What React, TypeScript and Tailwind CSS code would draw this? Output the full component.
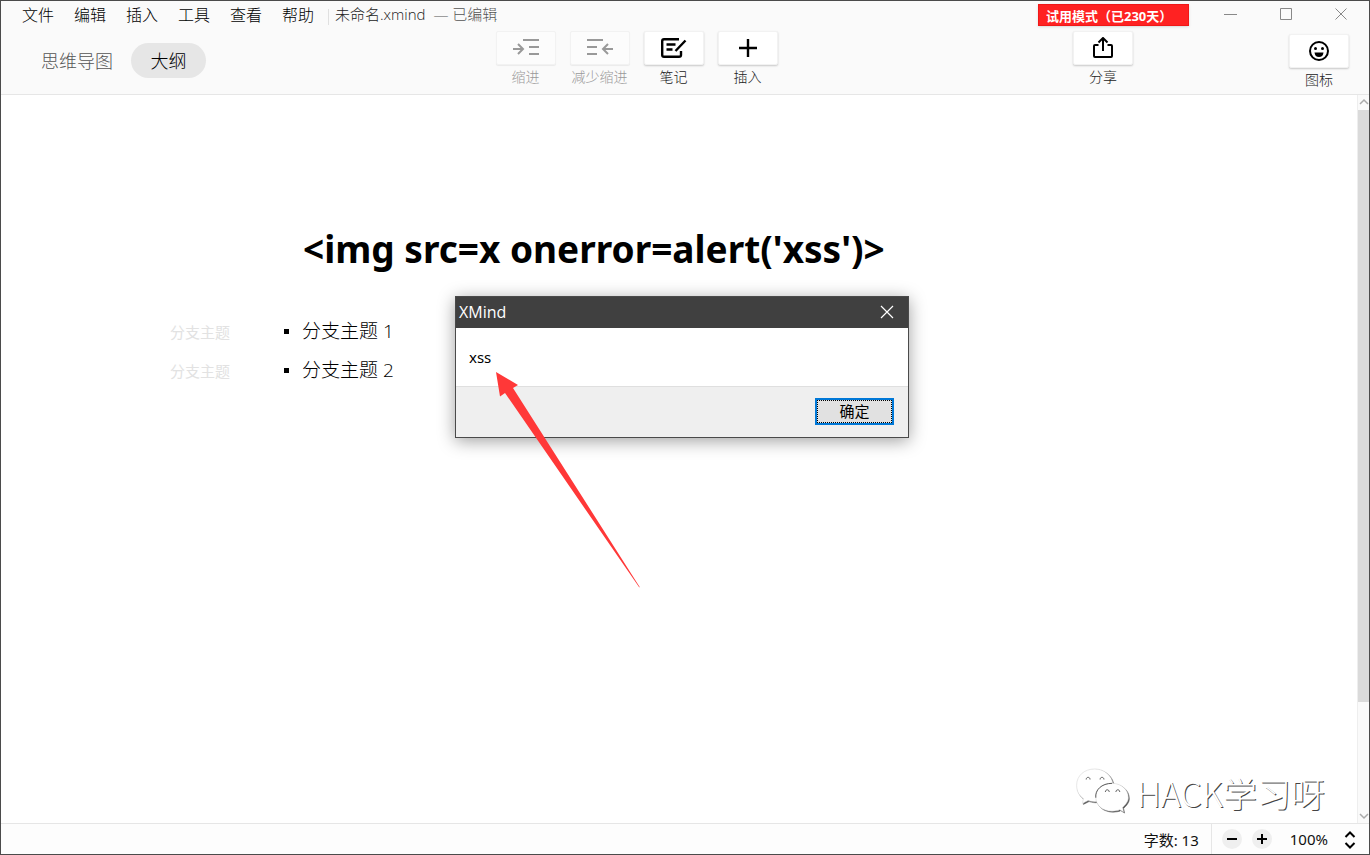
import type { ReactNode } from "react";

const ui = "font-['Noto_Sans','Noto_Sans_CJK_SC',sans-serif]";
const cjkLight = "font-['Open_Sans','Noto_Sans_CJK_SC',sans-serif] font-light";

const menus = ["文件", "编辑", "插入", "工具", "查看", "帮助"];
const topics = ["分支主题 1", "分支主题 2"];

function IndentIcon() {
  return (
    <svg width="28" height="20" viewBox="0 0 28 20" fill="none" stroke="currentColor" strokeWidth="2">
      <path d="M11 2H27M17 9H27M17 16H27M1 11H10M6 6L11 11L6 16" />
    </svg>
  );
}

function OutdentIcon() {
  return (
    <svg width="28" height="20" viewBox="0 0 28 20" fill="none" stroke="currentColor" strokeWidth="2">
      <path d="M1 2H17M1 9H11M1 16H11M27 11H18M22 6L17 11L22 16" />
    </svg>
  );
}

function NoteIcon() {
  return (
    <svg width="26" height="20" viewBox="0 0 26 20" fill="none" stroke="currentColor" strokeWidth="2.400">
      <path d="M18 1.200H3Q1.200 1.200 1.200 3V17Q1.200 18.800 3 18.800H18Q20 18.800 20 17V13M5.500 6.500H14.500M5.500 11.500H11.500M24.500 2.500L14.500 13" />
    </svg>
  );
}

function PlusIcon() {
  return (
    <svg width="20" height="20" viewBox="0 0 20 20" fill="none" stroke="currentColor" strokeWidth="2.400">
      <path d="M1 10H19M10 1V19" />
    </svg>
  );
}

function ShareIcon() {
  return (
    <svg width="22" height="22" viewBox="0 0 22 22" fill="none" stroke="currentColor" strokeWidth="2" strokeLinejoin="round">
      <path d="M6.500 8H3Q2 8 2 9V19Q2 20 3 20H19Q20 20 20 19V9Q20 8 19 8H15.500M11 14V1.500M6.500 5.500L11 1L15.500 5.500" />
    </svg>
  );
}

function FaceIcon() {
  return (
    <svg width="20" height="20" viewBox="0 0 20 20" fill="none">
      <circle cx="10" cy="10" r="9" stroke="currentColor" strokeWidth="2" />
      <circle cx="6.500" cy="7.500" r="1.500" fill="currentColor" />
      <circle cx="13.500" cy="7.500" r="1.500" fill="currentColor" />
      <path d="M5.500 11.500H14.500Q14 16 10 16Q6 16 5.500 11.500Z" fill="currentColor" />
    </svg>
  );
}

function ToolButton({ label, disabled, children }: { label: string; disabled?: boolean; children: ReactNode }) {
  return (
    <button type="button" disabled={disabled} className="group flex w-[60px] flex-col items-center gap-1 text-[#222]">
      <span className="flex h-[34px] w-full items-center justify-center rounded-xs border border-[#f2f2f2] bg-white text-black shadow-[0_1px_2px_#0003] group-disabled:bg-[#fcfcfc] group-disabled:text-[#999] group-disabled:shadow-[0_1px_1px_#00000010]">
        {children}
      </span>
      <span className={`${cjkLight} whitespace-nowrap text-[14px] leading-4 group-disabled:text-[#999]`}>{label}</span>
    </button>
  );
}

function TitleBar() {
  return (
    <div className="flex h-[30px] items-start">
      <nav className="flex pl-[18px] text-[16px] leading-7 text-black">
        {menus.map((m) => (
          <button key={m} type="button" className={`${cjkLight} w-[52px] whitespace-nowrap pl-[3px] text-left`}>
            {m}
          </button>
        ))}
      </nav>
      <div className="-ml-[3px] mt-2 h-4 w-px bg-[#e0e0e0]" />
      <div className={`${cjkLight} flex gap-2 whitespace-nowrap pl-[6px] text-[15px] leading-[26px]`}>
        <span className="text-[#222]">未命名.xmind</span>
        <span className="text-[#555]">— 已编辑</span>
      </div>
      <button
        type="button"
        className={`${ui} ml-auto mt-[3px] h-[22px] w-[151px] whitespace-nowrap border border-[#f01818] bg-[#ff2222] pl-[7px] text-left text-[13px] font-bold leading-[22px] text-white shadow-sm`}
      >
        试用模式（已230天）
      </button>
      <div className="ml-[14px] mr-px flex text-[#888]">
        <button type="button" aria-label="最小化" className="flex h-[26px] w-[55px] items-center justify-center">
          <svg width="14" height="14" viewBox="0 0 14 14" stroke="currentColor"><path d="M0 7.500H13" /></svg>
        </button>
        <button type="button" aria-label="最大化" className="flex h-[26px] w-[55px] items-center justify-center">
          <svg width="14" height="14" viewBox="0 0 14 14" fill="none" stroke="currentColor"><path d="M1.500 1.500H12.500V12.500H1.500Z" /></svg>
        </button>
        <button type="button" aria-label="关闭" className="flex h-[26px] w-[55px] items-center justify-center">
          <svg width="14" height="14" viewBox="0 0 14 14" stroke="currentColor"><path d="M1.500 1.500L12.500 12.500M12.500 1.500L1.500 12.500" /></svg>
        </button>
      </div>
    </div>
  );
}

function Toolbar() {
  return (
    <div className="flex h-[63px] items-start">
      <div className={`${cjkLight} flex items-center gap-5 pl-10 pt-3 text-[18px]`}>
        <button type="button" className="h-[35px] w-[70px] whitespace-nowrap pt-[2px] text-[#555]">思维导图</button>
        <button type="button" className="h-[35px] w-[75px] rounded-full bg-[#e6e6e6] pt-[2px] text-black">大纲</button>
      </div>
      <div className="flex-1" />
      <div className="flex gap-[14px] pr-[6px]">
        <ToolButton label="缩进" disabled><IndentIcon /></ToolButton>
        <ToolButton label="减少缩进" disabled><OutdentIcon /></ToolButton>
        <ToolButton label="笔记"><NoteIcon /></ToolButton>
        <ToolButton label="插入"><PlusIcon /></ToolButton>
      </div>
      <div className="flex-1" />
      <ToolButton label="分享"><ShareIcon /></ToolButton>
      <div className="ml-[156px] mr-5 pt-[3px]">
        <ToolButton label="图标"><FaceIcon /></ToolButton>
      </div>
    </div>
  );
}

function Outline() {
  return (
    <section className="flex-1 pt-[127px]">
      <h1 className={`${ui} pl-[302px] text-[37px] font-bold leading-[54px] text-black`}>
        {"<img src=x onerror=alert('xss')>"}
      </h1>
      <ul className="pt-9">
        {topics.map((t) => (
          <li key={t} className="flex h-[39px] items-center pl-[169px]">
            <span className={`${ui} w-[114px] pt-[2px] text-[15px] text-[#e2e2e2]`}>分支主题</span>
            <span className="size-[5px] bg-black" />
            <span className={`${cjkLight} pl-[13px] text-[19px] text-black`}>{t}</span>
          </li>
        ))}
      </ul>
    </section>
  );
}

function ScrollTrack() {
  return (
    <div className="flex w-3 flex-col items-center border-l border-[#eee] bg-[#fafafa] text-[#aaa]">
      <svg width="10" height="15" viewBox="0 0 10 15" fill="none" stroke="currentColor" strokeWidth="1.500"><path d="M1 9L5 5L9 9" /></svg>
      <div className="w-full grow-[592] bg-[#dadada]" />
      <div className="grow-[106]" />
      <svg width="10" height="15" viewBox="0 0 10 15" fill="none" stroke="currentColor" strokeWidth="1.500"><path d="M1 6L5 10L9 6" /></svg>
    </div>
  );
}

function AlertDialog() {
  return (
    <div
      role="dialog"
      aria-label="XMind"
      className={`${ui} absolute left-[454px] top-[295px] w-[454px] border border-[#4a4a4a] bg-white shadow-[0_3px_16px_#00000060]`}
    >
      <div className="flex h-[31px] items-center justify-between bg-[#404040] pb-px pl-[3px] pr-[14px] text-white">
        <span className="font-['Open_Sans',sans-serif] text-[16px] leading-6">XMind</span>
        <button type="button" aria-label="关闭对话框">
          <svg width="14" height="14" viewBox="0 0 14 14" stroke="currentColor" strokeWidth="1.200"><path d="M1 1L13 13M13 1L1 13" /></svg>
        </button>
      </div>
      <p className="flex h-[58px] items-center pl-[13px] text-[15px] text-black">xss</p>
      <div className="flex h-[51px] items-center justify-end border-t border-[#dfdfdf] bg-[#efefef] pb-[2px] pr-[14px]">
        <button type="button" className="h-[27px] w-[79px] border-2 border-[#0078d7] bg-[#e1e1e1] text-[15px] text-black">
          <span className="flex h-full items-center justify-center border border-dotted border-black">确定</span>
        </button>
      </div>
    </div>
  );
}

function Arrow() {
  return (
    <svg className="pointer-events-none absolute left-[494px] top-[370px]" width="146" height="218" viewBox="0 0 146 218">
      <path d="M1 1L23 14L18 17L145 216.500L144 216L10 22L5 25.500Z" fill="#ff3838" />
    </svg>
  );
}

function Watermark() {
  return (
    <div className="pointer-events-none absolute bottom-9 right-11 flex items-center gap-[7px]">
      <svg
        className="mb-1 [filter:drop-shadow(1px_1px_0_#555)]"
        width="55"
        height="46"
        viewBox="0 0 56 48"
        fill="#fff"
        stroke="#ccc"
        strokeWidth="0.5"
      >
        <path d="M20 1C9 1 1 8 1 18C1 25 4 29 8 32L7 37L13 34C16 35 19 35.500 22 35C37 34 40 24 39 17C38 8 30 1 20 1Z" />
        <path d="M38 16C28 16 21 22 21 30.500C21 39 28 45 38 45C41 45 44 44.500 46 43.500L50 46L49 41C52 38.500 55 35 55 31C55 22 47 16 38 16Z" />
        <g fill="none" stroke="#555" strokeWidth="1">
          <path d="M11 12C11 9 15 9 15 12M25.500 12C25.500 9 29.500 9 29.500 12M31 25C31 22 35 22 35 25M42 25C42 22 46 22 46 25" />
          <path d="M21 31C20 23 27 16 38 16" />
        </g>
      </svg>
      <span className="font-['Noto_Sans_CJK_SC',sans-serif] whitespace-nowrap text-[34px] font-light leading-10 text-white [text-shadow:1px_1px_0_#444]">
        HACK学习呀
      </span>
    </div>
  );
}

function StatusBar() {
  return (
    <footer className={`${ui} flex h-[31px] items-center justify-end border-t border-[#e6e6e6] bg-[#fdfdfd] text-[15px] text-[#111]`}>
      <span className="whitespace-nowrap pr-3 pt-[2px]">字数: 13</span>
      <div className="h-full w-px bg-[#e6e6e6]" />
      <div className="flex gap-[10px] pl-[10px]">
        <button type="button" aria-label="缩小" className="flex size-5 items-center justify-center rounded-full bg-[#efefef]">
          <svg width="10" height="10" viewBox="0 0 10 10" stroke="black" strokeWidth="2"><path d="M0 5H10" /></svg>
        </button>
        <button type="button" aria-label="放大" className="flex size-5 items-center justify-center rounded-full bg-[#efefef]">
          <svg width="10" height="10" viewBox="0 0 10 10" stroke="black" strokeWidth="2"><path d="M0 5H10M5 0V10" /></svg>
        </button>
      </div>
      <button type="button" className="flex items-center gap-4 pl-[18px] pr-[13px] pt-px">
        <span>100%</span>
        <svg width="12" height="18" viewBox="0 0 12 18" fill="none" stroke="black" strokeWidth="2"><path d="M1.500 6L6 1.500L10.500 6M1.500 12L6 16.500L10.500 12" /></svg>
      </button>
    </footer>
  );
}

export default function App() {
  return (
    <div className="relative flex min-h-screen flex-col overflow-hidden border border-[#4b4b4b] bg-white">
      <header className="border-b border-[#e6e6e6] bg-[#fafafa]">
        <TitleBar />
        <Toolbar />
      </header>
      <main className="flex flex-1">
        <Outline />
        <ScrollTrack />
      </main>
      <StatusBar />
      <Watermark />
      <AlertDialog />
      <Arrow />
    </div>
  );
}
